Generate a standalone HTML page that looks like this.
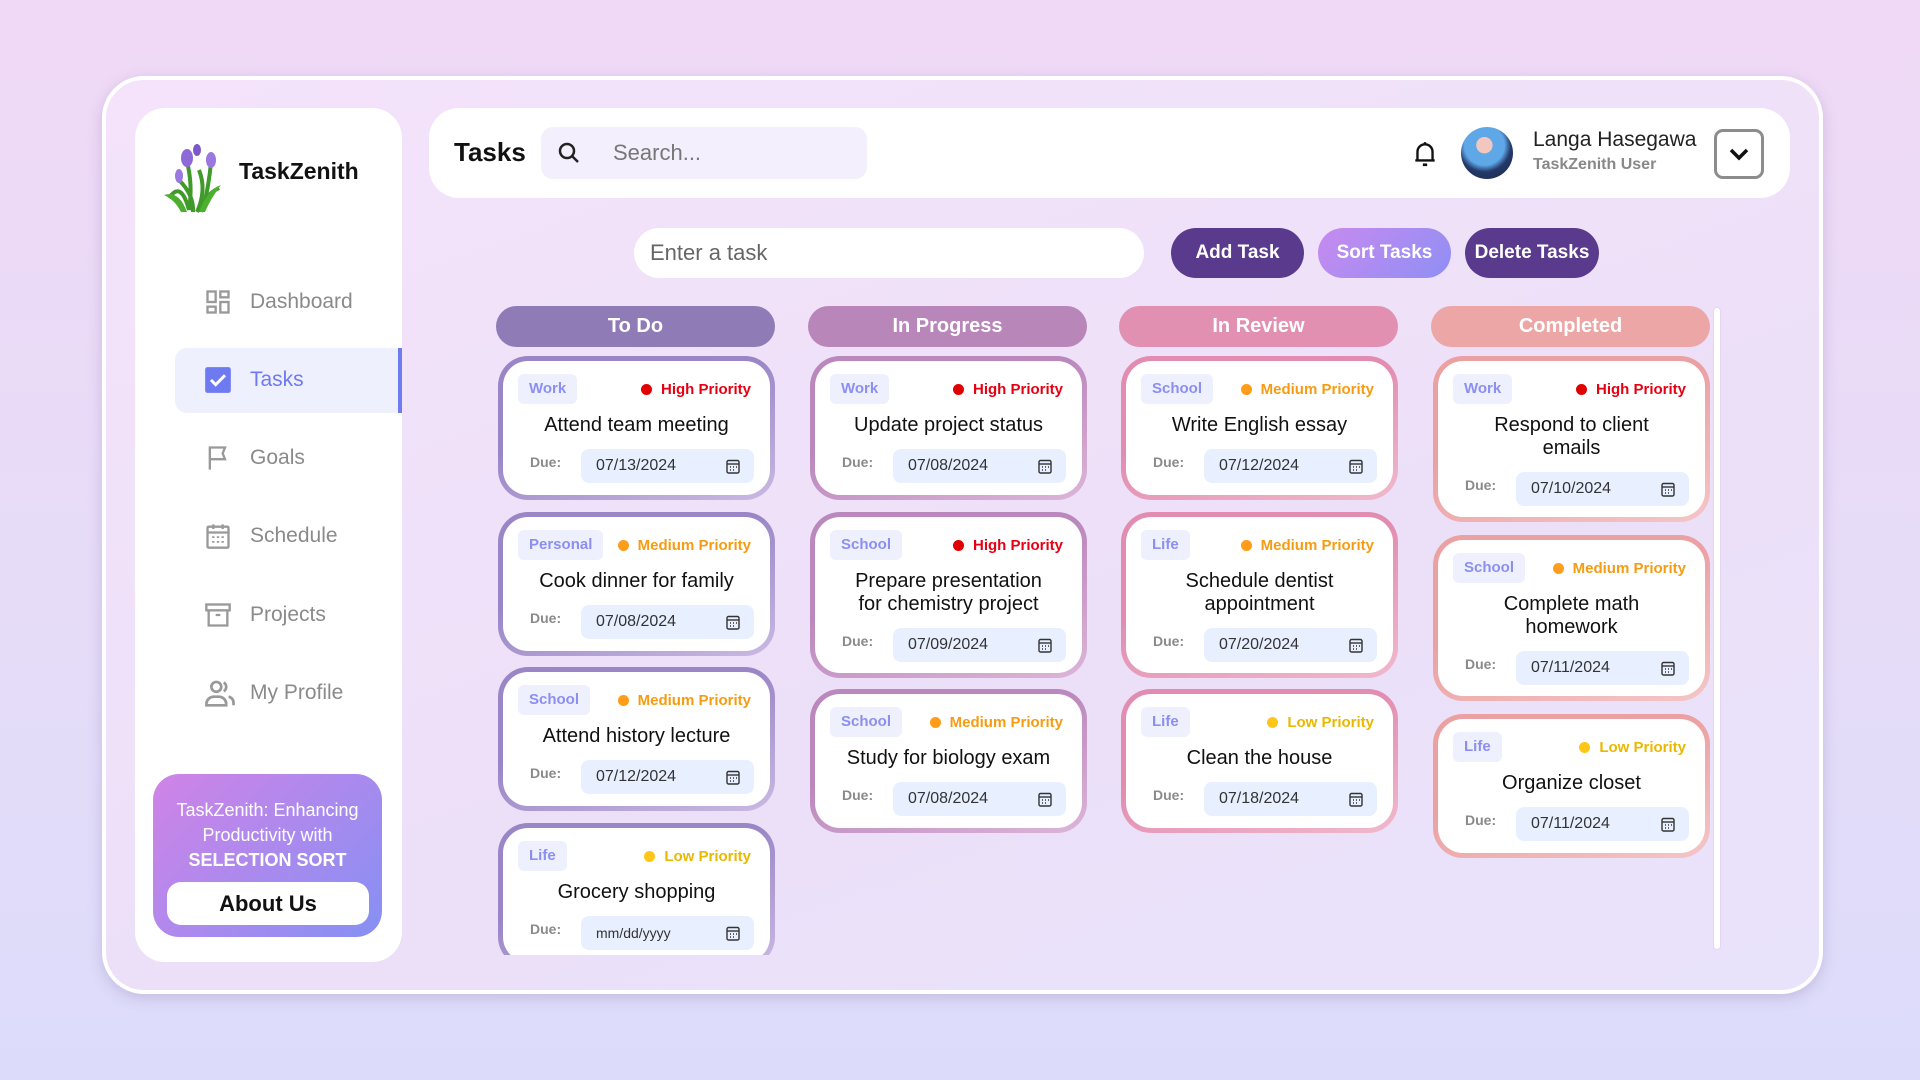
<!DOCTYPE html>
<html><head><meta charset="utf-8"><style>
*{box-sizing:border-box;margin:0;padding:0}
body{width:1920px;height:1080px;overflow:hidden;font-family:"Liberation Sans",sans-serif;background:linear-gradient(180deg,#f0d9f6 0%,#e6dcf8 55%,#dcdcfa 100%);position:relative}
.abs{position:absolute}
.frame{left:102px;top:76px;width:1721px;height:918px;border-radius:42px;border:4px solid #fff;background:linear-gradient(160deg,#f4e3fa,#ece0f8 60%,#e9e2fb);box-shadow:0 4px 14px rgba(120,90,160,.25)}
.side{left:135px;top:108px;width:267px;height:854px;background:#fff;border-radius:30px}
.nav{position:absolute;left:0;width:267px;height:64px;display:flex;align-items:center;font-size:21px;color:#8a8a8a}
.nav svg{position:absolute;left:69px}
.nav span{position:absolute;left:115px}
.hdr{left:429px;top:108px;width:1361px;height:90px;background:#fff;border-radius:30px}
.card{position:absolute;width:277px;border:5px solid transparent;border-radius:30px;padding:13px 15px 0 15px}
.row{display:flex;justify-content:space-between;align-items:center;height:30px}
.tag{background:#eef0fe;color:#8c8ff0;font-size:15px;font-weight:bold;padding:0 11px;height:30px;line-height:30px;border-radius:6px}
.pri{font-size:15px;font-weight:bold;display:flex;align-items:center;margin-right:4px}
.pri i{display:inline-block;width:11px;height:11px;border-radius:50%;margin-right:9px}
.title{text-align:center;font-size:20px;color:#111;line-height:23px;margin-top:10px;font-weight:500}
.due{display:flex;align-items:center;margin-top:11px;height:36px}
.due b{font-size:14px;color:#8a8a8a;width:63px;padding-left:12px;margin-top:-8px}
.date{width:173px;height:34px;background:#e8efff;border-radius:8px;font-size:16px;color:#333;padding-left:15px;line-height:34px;position:relative}
.date svg{position:absolute;right:14px;top:10px}
.colh{position:absolute;top:306px;width:279px;height:41px;border-radius:21px;color:#fff;font-weight:bold;font-size:20px;text-align:center;line-height:41px}
.btn{position:absolute;top:228px;height:50px;border-radius:25px;color:#fff;font-weight:bold;font-size:19px;text-align:center;line-height:50px}
</style></head><body>
<div class="abs frame"></div>
<div class="abs side">
  <svg class="abs" style="left:24px;top:32px" width="74" height="74" viewBox="0 0 74 74">
    <path d="M10 58 Q22 40 30 70 M20 40 Q35 55 34 72 M60 48 Q45 55 42 72 M40 30 Q48 50 38 72 M28 22 Q34 45 30 70 M52 22 Q50 45 44 70" stroke="#3f9a2a" stroke-width="4" fill="none"/>
    <path d="M5 55 Q20 50 28 72 L22 72 Q16 60 5 55Z M62 45 Q48 50 40 72 L46 72 Q52 58 62 45Z" fill="#4caf30"/>
    <ellipse cx="28" cy="18" rx="6" ry="9" fill="#8e6ad8"/><ellipse cx="52" cy="20" rx="5" ry="8" fill="#9a78e0"/><ellipse cx="20" cy="36" rx="4" ry="7" fill="#9a7ae0"/><ellipse cx="38" cy="10" rx="4" ry="6" fill="#7c58c8"/>
  </svg>
  <div class="abs" style="left:104px;top:50px;font-size:23px;font-weight:bold;color:#111">TaskZenith</div>
  <div class="nav" style="top:162px"><svg width="28" height="28" viewBox="0 0 24 24" fill="none" stroke="#999" stroke-width="2"><rect x="3" y="3" width="7" height="9"/><rect x="14" y="3" width="7" height="5"/><rect x="14" y="12" width="7" height="9"/><rect x="3" y="16" width="7" height="5"/></svg><span>Dashboard</span></div>
  <div class="abs" style="left:40px;top:240px;width:227px;height:65px;background:#eef0fd;border-radius:12px 0 0 12px;border-right:4px solid #6e7af0"></div>
  <div class="nav" style="top:240px;color:#6e7af0"><svg width="28" height="28" viewBox="0 0 24 24"><rect x="1" y="1" width="22" height="22" rx="2" fill="#6e7af0"/><path d="M6 12l4 4 8-8" stroke="#fff" stroke-width="2.5" fill="none"/></svg><span>Tasks</span></div>
  <div class="nav" style="top:318px"><svg width="28" height="28" viewBox="0 0 24 24" fill="none" stroke="#999" stroke-width="2"><path d="M5 22V3h13l-2 5 2 5H5"/></svg><span>Goals</span></div>
  <div class="nav" style="top:396px"><svg width="28" height="28" viewBox="0 0 24 24" fill="none" stroke="#999" stroke-width="2"><rect x="3" y="4" width="18" height="18" rx="1"/><path d="M3 9h18M8 2v4M16 2v4"/><path d="M7 13h2M11 13h2M15 13h2M7 17h2M11 17h2M15 17h2" stroke-width="1.5"/></svg><span>Schedule</span></div>
  <div class="nav" style="top:475px"><svg width="28" height="28" viewBox="0 0 24 24" fill="none" stroke="#999" stroke-width="2"><rect x="2" y="3" width="20" height="5"/><path d="M4 8v13h16V8M10 12h4"/></svg><span>Projects</span></div>
  <div class="nav" style="top:553px"><svg width="32" height="28" viewBox="0 0 26 22" fill="none" stroke="#999" stroke-width="2.2"><circle cx="10" cy="6" r="4"/><path d="M2 21v-2a6 6 0 0 1 6-5h4a6 6 0 0 1 6 5v2zM16 2.5a4 4 0 0 1 0 7M20 14a5 5 0 0 1 4 5v2"/></svg><span>My Profile</span></div>
  <div class="abs" style="left:18px;top:666px;width:229px;height:163px;border-radius:26px;background:linear-gradient(135deg,#d083e6,#a88aee 55%,#8690f3)">
    <div style="color:#fff;font-size:18px;text-align:center;margin-top:24px;line-height:25px">TaskZenith: Enhancing<br>Productivity with<br><b>SELECTION SORT</b></div>
    <div style="position:absolute;left:14px;top:108px;width:202px;height:43px;background:#fff;border-radius:14px;text-align:center;line-height:43px;font-size:22px;font-weight:bold;color:#111">About Us</div>
  </div>
</div>
<div class="abs hdr">
  <div class="abs" style="left:25px;top:29px;font-size:26px;font-weight:bold;color:#111">Tasks</div>
  <div class="abs" style="left:112px;top:19px;width:326px;height:52px;background:#f4effc;border-radius:12px">
    <svg class="abs" style="left:16px;top:14px" width="24" height="24" viewBox="0 0 24 24" fill="none" stroke="#222" stroke-width="2.5"><circle cx="10" cy="10" r="7"/><path d="M15 15l6 6"/></svg>
    <div class="abs" style="left:72px;top:13px;font-size:22px;color:#777">Search...</div>
  </div>
  <svg class="abs" style="left:983px;top:32px" width="26" height="28" viewBox="0 0 24 26" fill="none" stroke="#111" stroke-width="2.2"><path d="M5 19V11a7 7 0 0 1 14 0v8H3h18"/><path d="M10 23h4" stroke-width="2.5"/><path d="M12 2v2"/></svg>
  <div class="abs" style="left:1032px;top:19px;width:52px;height:52px;border-radius:50%;background:radial-gradient(circle at 45% 35%,#f2c7c0 0 18%,#5fa8e8 19% 45%,#243a6a 60%,#1b2240)"></div>
  <div class="abs" style="left:1104px;top:20px;font-size:21px;color:#222;font-weight:500">Langa Hasegawa</div>
  <div class="abs" style="left:1104px;top:48px;font-size:16px;color:#888;font-weight:bold">TaskZenith User</div>
  <div class="abs" style="left:1285px;top:21px;width:50px;height:50px;border:3px solid #8c8c8c;border-radius:9px">
    <svg class="abs" style="left:11px;top:13px" width="22" height="18" viewBox="0 0 22 18" fill="none" stroke="#111" stroke-width="3.5"><path d="M3 5l8 8 8-8"/></svg>
  </div>
</div>
<div class="abs" style="left:634px;top:228px;width:510px;height:50px;background:#fff;border-radius:25px;font-size:22px;color:#666;line-height:50px;padding-left:16px">Enter a task</div>
<div class="btn" style="left:1171px;width:133px;background:#5a3a8c">Add Task</div>
<div class="btn" style="left:1318px;width:133px;background:linear-gradient(135deg,#c88aef,#8f8ff4)">Sort Tasks</div>
<div class="btn" style="left:1465px;width:134px;background:#5a3a8c">Delete Tasks</div>
<div class="colh" style="left:496px;background:#8f7bb6">To Do</div>
<div class="colh" style="left:808px;background:#b886b9">In Progress</div>
<div class="colh" style="left:1119px;background:#e290b2">In Review</div>
<div class="colh" style="left:1431px;background:#eca6a6">Completed</div>
<div class="abs" style="left:1713px;top:307px;width:8px;height:643px;border-radius:4px;background:#fff;border:1px solid #e5d6f0"></div>
<div class="abs" id="board" style="left:0;top:300px;width:1920px;height:655px;overflow:hidden"></div>
<script>
var cal='<svg width="14" height="15" viewBox="0 0 14 15" fill="none" stroke="#333" stroke-width="1.4"><rect x="1" y="1.5" width="12" height="12.5" rx="1.5"/><path d="M1 5h12"/><path d="M4 8h1M7 8h1M10 8h1M4 11h1M7 11h1" stroke-width="1.6"/></svg>';
var P={H:['#e00000','#e60012','High Priority'],M:['#ff9c1a','#f59c12','Medium Priority'],L:['#ffc61a','#e9b800','Low Priority']};
var cols=[[498,'#9a86c6','#c9b9e2'],[810,'#bb88bd','#dcb5d8'],[1121,'#e28cb0','#f0b9cc'],[1433,'#eba0a2','#f4c6c6']];
var data=[
[[356,'Work','H','Attend team meeting','07/13/2024'],[512,'Personal','M','Cook dinner for family','07/08/2024'],[667,'School','M','Attend history lecture','07/12/2024'],[823,'Life','L','Grocery shopping','mm/dd/yyyy']],
[[356,'Work','H','Update project status','07/08/2024'],[512,'School','H','Prepare presentation<br>for chemistry project','07/09/2024'],[689,'School','M','Study for biology exam','07/08/2024']],
[[356,'School','M','Write English essay','07/12/2024'],[512,'Life','M','Schedule dentist<br>appointment','07/20/2024'],[689,'Life','L','Clean the house','07/18/2024']],
[[356,'Work','H','Respond to client<br>emails','07/10/2024'],[535,'School','M','Complete math<br>homework','07/11/2024'],[714,'Life','L','Organize closet','07/11/2024']]];
var h='';
data.forEach(function(c,i){var co=cols[i];c.forEach(function(d){var two=d[3].indexOf('<br>')>0;var p=P[d[2]];
h+='<div class="card" style="left:'+co[0]+'px;top:'+(d[0]-300)+'px;height:'+(two?166:144)+'px;background:linear-gradient(#fff,#fff) padding-box,linear-gradient(160deg,'+co[1]+' 40%,'+co[2]+') border-box"><div class="row"><span class="tag">'+d[1]+'</span><span class="pri" style="color:'+p[1]+'"><i style="background:'+p[0]+'"></i>'+p[2]+'</span></div><div class="title">'+d[3]+'</div><div class="due"><b>Due:</b><div class="date"'+(d[4][0]=='m'?' style="font-size:14px"':'')+'>'+d[4]+cal+'</div></div></div>';});});
document.getElementById('board').innerHTML=h;
</script>
</body></html>
